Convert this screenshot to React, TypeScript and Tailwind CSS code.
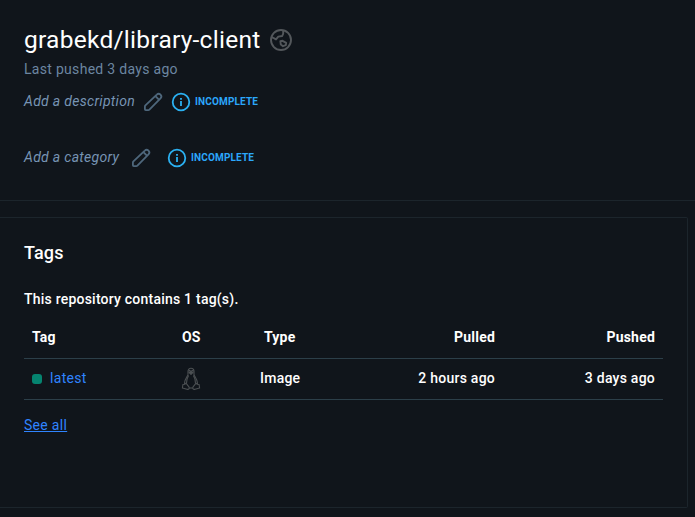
import React from 'react';

function EarthIcon() {
  return (
    <svg className="block h-[24px] w-[24px]" viewBox="0 0 24 24" fill="none" stroke="#53575b" strokeWidth="1.9" strokeLinejoin="round">
      <circle cx="12" cy="12" r="10" />
      <path d="M2.7 9 7 11.4 9.3 8.6 13.2 8 14.2 5.6V2.5" />
      <path d="M11.4 13.2 13.6 12.8 17.2 14.8 16.8 17.2 14 18.2 11.8 16.6z" />
    </svg>
  );
}

function PencilIcon() {
  return (
    <svg className="block h-[24px] w-[24px]" viewBox="0 0 24 24" fill="none" stroke="#4e677c" strokeWidth="1.8" strokeLinejoin="round">
      <path d="M3.9 19.3V16.5q0-.6.5-1.1L15.8 4.6a2.6 2.6 0 0 1 3.7 3.7L8.4 19.6q-.5.5-1.1.5H4.7q-.8 0-.8-.8z" />
      <path d="M14.4 6.1 17.9 9.6" />
    </svg>
  );
}

function Incomplete() {
  return (
    <span className="flex items-center text-[#2bb1f2]">
      <svg className="block h-[20px] w-[20px]" viewBox="0 0 20 20" fill="none" stroke="currentColor" strokeWidth="1.8">
        <circle cx="10" cy="10" r="8.3" />
        <path d="M10 9v5M10 6v1.7" />
      </svg>
      <span className="ml-1 text-[10px] leading-4 font-bold tracking-[0.15px] text-[#2ba7fb]">INCOMPLETE</span>
    </span>
  );
}

function TuxIcon() {
  return (
    <svg className="block h-[24px] w-[20px]" viewBox="0 0 20 24" fill="none" stroke="#4c5053" strokeWidth="1.1" strokeLinejoin="round">
      <path d="M7 7.6V4.3C7 2.3 8.2 1.3 10 1.3s3 1 3 3v3.3c.6 2.3 3.4 4.6 3.4 8.2v1.4M3.6 17.2v-1.4C3.6 12.2 6.4 10 7 7.6" />
      <path d="M7.6 8.5C6 11 5.5 14 5.5 16.2M12.4 8.5c1.6 2.5 2.1 5.5 2.1 7.7" />
      <path d="M7.4 4.4 8.6 3.4 10 4.4l1.4-1L12.6 4.4" />
      <path d="M8 5.4 10 4.6 12 5.4 10 7.4z" fill="#4c5053" />
      <path d="M5 16.2 8.1 20.2c.5 1.7-.6 2.5-2.2 2L1.4 21l.5-3.5 1.7-.3zM15 16.2l-3.1 4c-.5 1.7.6 2.5 2.2 2l4.5-1.2-.5-3.5-1.7-.3z" />
      <path d="M8.2 21h3.6" />
    </svg>
  );
}

export default function App() {
  return (
    <main className="h-[517px] w-[695px] overflow-hidden bg-[#10151b] font-[Roboto,sans-serif] text-[14px] tracking-[0.3px] text-white">
      <header className="flex h-[201px] flex-col border-b border-[#1c252c] pt-6 pl-6">
        <div className="flex h-8 items-center">
          <h1 className="text-[24.5px] leading-8 tracking-[0.26px]">grabekd/library-client</h1>
          <span className="ml-[9px]"><EarthIcon /></span>
        </div>
        <p className="mt-[3px] leading-5 text-[#6c86a1]">Last pushed 3 days ago</p>
        <div className="mt-[11px] flex h-6 items-center">
          <span className="w-[117px] pb-[2px] leading-5 text-[#7794b4] italic">Add a description</span>
          <PencilIcon />
          <span className="ml-[6px]"><Incomplete /></span>
        </div>
        <div className="mt-8 flex h-6 items-center">
          <span className="w-[105px] pb-[2px] leading-5 text-[#7794b4] italic">Add a category</span>
          <PencilIcon />
          <span className="ml-[14px]"><Incomplete /></span>
        </div>
      </header>
      <section className="mt-4 h-[291px] w-[688px] rounded-r-[2px] border-y border-r border-[#1c252c] pt-[23px] pl-6">
        <h2 className="text-[18px] leading-6 font-medium tracking-[0.15px]">Tags</h2>
        <p className="mt-6 leading-5 font-medium tracking-[0.22px]">This repository contains 1 tag(s).</p>
        <table className="mt-2 w-[639px] table-fixed border-collapse">
          <colgroup>
            <col className="w-[150px]" />
            <col className="w-[78px]" />
            <col className="w-[100px]" />
            <col className="w-[151px]" />
            <col className="w-[160px]" />
          </colgroup>
          <thead>
            <tr className="h-[41px] border-b border-[#2c3f49] tracking-[0.2px]">
              <th className="px-2 text-left font-bold">Tag</th>
              <th className="pl-2 text-left font-bold">OS</th>
              <th className="pl-3 text-left font-bold">Type</th>
              <th className="px-2 text-right font-bold">Pulled</th>
              <th className="px-2 text-right font-bold">Pushed</th>
            </tr>
          </thead>
          <tbody>
            <tr className="h-[41px] border-b border-[#2c3f49] font-medium tracking-[0.24px]">
              <td className="px-2">
                <span className="flex items-center font-normal tracking-[0.31px] text-[#2f84ff]">
                  <span className="mt-px mr-2 h-[10px] w-[10px] rounded-[3px] bg-[#058470]" />
                  latest
                </span>
              </td>
              <td className="pl-[7px]"><TuxIcon /></td>
              <td className="pl-2">Image</td>
              <td className="px-2 text-right">2 hours ago</td>
              <td className="px-2 text-right">3 days ago</td>
            </tr>
          </tbody>
        </table>
        <a className="mt-[15px] block w-fit leading-5 text-[#2f84ff] underline">See all</a>
      </section>
    </main>
  );
}
